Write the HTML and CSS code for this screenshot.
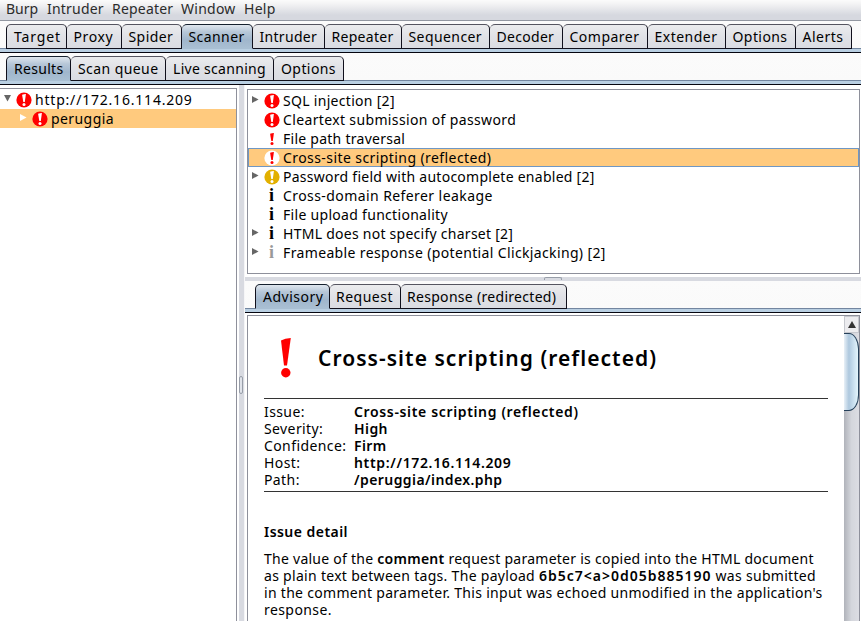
FILE: index.html
```html
<!DOCTYPE html>
<html lang="en">
<head>
<meta charset="utf-8">
<title>Burp Suite</title>
<link rel="stylesheet" href="styles.css">
</head>
<body>
<svg width="0" height="0" class="defs">
  <defs>
    <g id="bang"><path d="M-1.9 -5.2Q0 -6 1.9 -6L0.8 2H-0.7Z"/><circle cx="0" cy="4.6" r="1.5"/></g>
  </defs>
</svg>
<div class="app">
  <nav class="menubar">
    <span class="m-burp">Burp</span><span class="m-intruder">Intruder</span><span class="m-repeater">Repeater</span><span class="m-window">Window</span><span class="m-help">Help</span>
  </nav>
  <div class="tabs main-tabs">
    <div class="tab w60 ls9">Target</div><div class="tab w55 ls6">Proxy</div><div class="tab w60 ls4">Spider</div><div class="tab w71 ls4 active">Scanner</div><div class="tab w72 ls3">Intruder</div><div class="tab w77 ls3">Repeater</div><div class="tab w88 ls4">Sequencer</div><div class="tab w73 ls3">Decoder</div><div class="tab w85 ls5">Comparer</div><div class="tab w78 ls5">Extender</div><div class="tab w70 ls4">Options</div><div class="tab w56 ls5">Alerts</div>
  </div>
  <div class="tabs sub-tabs">
    <div class="tab w64 ls3 active">Results</div><div class="tab w95 ls4">Scan queue</div><div class="tab w108 ls3">Live scanning</div><div class="tab w70 ls4">Options</div>
  </div>
  <div class="workspace">
    <div class="tree">
      <div class="node"><svg class="arrow" viewBox="0 0 8 8"><path d="M0 0H8L4 7.5Z"/></svg><svg class="icon red" viewBox="-8 -8 16 16"><circle r="7.6"/><use href="#bang"/></svg><span class="ls8">http://172.16.114.209</span></div>
      <div class="node child selected"><svg class="arrow" viewBox="0 0 8 8"><path d="M0 0V8L7.5 4Z"/></svg><svg class="icon red" viewBox="-8 -8 16 16"><circle r="7.6"/><use href="#bang"/></svg><span class="ls4">peruggia</span></div>
    </div>
    <div class="vsplit"><i></i></div>
    <div class="right">
      <div class="issues">
        <div class="issue"><svg class="arrow" viewBox="0 0 8 8"><path d="M0 0V8L7.5 4Z"/></svg><svg class="icon red" viewBox="-8 -8 16 16"><circle r="7.6"/><use href="#bang"/></svg><span class="ls3">SQL injection [2]</span></div>
        <div class="issue"><i class="arrow"></i><svg class="icon red" viewBox="-8 -8 16 16"><circle r="7.6"/><use href="#bang"/></svg><span class="ls36">Cleartext submission of password</span></div>
        <div class="issue"><i class="arrow"></i><svg class="icon plain" viewBox="-8 -8 16 16"><use href="#bang"/></svg><span class="ls26">File path traversal</span></div>
        <div class="issue selected"><i class="arrow"></i><svg class="icon white" viewBox="-8 -8 16 16"><circle r="7.6"/><use href="#bang"/></svg><span class="ls4">Cross-site scripting (reflected)</span></div>
        <div class="issue"><svg class="arrow" viewBox="0 0 8 8"><path d="M0 0V8L7.5 4Z"/></svg><svg class="icon amber" viewBox="-8 -8 16 16"><circle r="7.6"/><use href="#bang"/></svg><span class="ls26">Password field with autocomplete enabled [2]</span></div>
        <div class="issue"><i class="arrow"></i><b class="info">i</b><span class="ls4">Cross-domain Referer leakage</span></div>
        <div class="issue"><i class="arrow"></i><b class="info">i</b><span class="ls3">File upload functionality</span></div>
        <div class="issue"><svg class="arrow" viewBox="0 0 8 8"><path d="M0 0V8L7.5 4Z"/></svg><b class="info">i</b><span class="ls26">HTML does not specify charset [2]</span></div>
        <div class="issue"><svg class="arrow" viewBox="0 0 8 8"><path d="M0 0V8L7.5 4Z"/></svg><b class="info faint">i</b><span class="ls36">Frameable response (potential Clickjacking) [2]</span></div>
      </div>
      <div class="hsplit"><i></i></div>
      <div class="tabs detail-tabs">
        <div class="tab w74 ls5 active">Advisory</div><div class="tab w71 ls5">Request</div><div class="tab w166 ls3">Response (redirected)</div>
      </div>
      <div class="viewer">
        <article class="advisory">
          <header><svg class="big" viewBox="0 0 12 42"><path d="M1 3.4Q5 1.2 10.8 1L7 28.5H4Z"/><circle cx="5.8" cy="35.8" r="4.7"/></svg><h1>Cross-site scripting (reflected)</h1></header>
          <dl>
            <dt>Issue:</dt><dd class="ls66">Cross-site scripting (reflected)</dd>
            <dt>Severity:</dt><dd class="ls4">High</dd>
            <dt>Confidence:</dt><dd class="ls4">Firm</dd>
            <dt>Host:</dt><dd class="ls66">http://172.16.114.209</dd>
            <dt>Path:</dt><dd class="ls4">/peruggia/index.php</dd>
          </dl>
          <h2>Issue detail</h2>
          <p><span class="ls26">The value of the <b>comment</b> request parameter is copied into the HTML document</span><br><span class="ls3">as plain text between tags. The payload <b class="payload">6b5c7&lt;a&gt;0d05b885190</b> was submitted</span><br><span class="ls3">in the comment parameter. This input was echoed unmodified in the application's</span><br><span class="ls4">response.</span></p>
        </article>
        <div class="scrollbar"><div class="up"><svg viewBox="0 0 8 7"><path d="M4 0L8 7H0Z"/></svg></div><div class="thumb"></div></div>
      </div>
    </div>
  </div>
</div>
</body>
</html>
```
FILE: styles.css
```css
* { box-sizing: border-box; }
body { margin: 0; background: #fff; color: #000; font: 14px/19px "Noto Sans", "Open Sans", sans-serif; overflow: hidden; }
.defs { position: absolute; }
.app { width: 861px; height: 621px; display: flex; flex-direction: column; overflow: hidden; white-space: nowrap; }

.menubar { height: 21px; flex: none; display: flex; padding-left: 6px; line-height: 17px; color: #2b2b2b; background: linear-gradient(#fbfbfb 0, #f3f3f4 20%, #d6d8df 75%, #d6d8df 100%); border-bottom: 1px solid #9297a1; }
.m-burp { width: 41px; }
.m-intruder { width: 65px; letter-spacing: .2px; }
.m-repeater { width: 69px; letter-spacing: .2px; }
.m-window { width: 63px; letter-spacing: .25px; }
.m-help { letter-spacing: .3px; }

.tabs { flex: none; display: flex; align-items: flex-end; padding-left: 6px; background: linear-gradient(#fbfbfb, #fafafa) 0 0 / 100% calc(100% - 3px) no-repeat, #b9cfe2; border-bottom: 1px solid #05050f; position: relative; }
.tabs::before { content: ""; position: absolute; left: 0; right: 0; bottom: 3px; height: 1px; background: #7386a0; }
.main-tabs { height: 32px; padding-bottom: 3px; }
.sub-tabs { height: 32px; padding-bottom: 3px; }
.tab { position: relative; height: 25px; padding-left: 7px; line-height: 24px; border: 1px solid #10101c; border-top-color: #555560; border-left-width: 0; border-radius: 5px 5px 0 0; background: linear-gradient(#ebecee, #e0e1e6 50%, #dadce2); }
.tab:first-child { border-left-width: 1px; padding-left: 7px; }
.tab.active { border-bottom-color: #a9bfd3; background: linear-gradient(#dfe6ee 0, #b7c7d8 30%, #a0b6cc 65%, #a9bfd3 100%); border-top-color: #15202e; }
.w55{width:55px}.w56{width:56px}.w60{width:60px}.w64{width:65px}.w70{width:70px}.w71{width:71px}.w72{width:72px}.w73{width:73px}.w74{width:75px}.w77{width:77px}.w78{width:78px}.w85{width:85px}.w88{width:88px}.w95{width:95px}.w108{width:108px}.w166{width:166px}
.main-tabs .tab { padding-left: 6.5px; }
.main-tabs .tab:first-child { width: 61px; padding-left: 7px; }
.detail-tabs .tab + .tab { padding-left: 6px; }
.ls26 { letter-spacing: .26px; }
.ls3 { letter-spacing: .3px; }
.ls36 { letter-spacing: .36px; }
.ls4 { letter-spacing: .42px; }
.ls5 { letter-spacing: .49px; }
.ls6 { letter-spacing: .62px; }
.ls66 { letter-spacing: .65px; }
.ls8 { letter-spacing: .8px; }
.ls9 { letter-spacing: .88px; }

.workspace { flex: 1; display: flex; min-height: 0; }
.tree { width: 237px; margin-top: 3px; padding-top: 1px; border: 1px solid #8e909b; border-left: 0; border-bottom: 0; }
.node { height: 19px; display: flex; align-items: center; padding-left: 4px; }
.child { padding-left: 20px; }
.arrow { width: 7px; height: 7px; fill: #666; flex: none; }
.node .arrow { margin-right: 4.5px; margin-top: -3px; }
.node .icon { margin-right: 3.5px; }
.child .arrow { fill: #fff; }
.selected { background: #ffca7e; }
.icon { width: 16px; height: 16px; flex: none; }
.red { fill: #f00; }
.amber { fill: #e2b000; }
.red use, .amber use { fill: #fff; }
.white { fill: #fff; }
.white use, .plain { fill: #f00; }

.vsplit { width: 8px; border-left: 2px solid #fff; border-right: 1px solid #f5f5f7; background: #d8dae1; display: flex; align-items: flex-start; }
.vsplit i { width: 4px; height: 18px; margin-top: 291px; border: 1px solid #979da8; border-radius: 2px; background: #e0e3ea; }
.right { flex: 1; display: flex; flex-direction: column; min-width: 0; }
.issues { height: 185px; flex: none; margin: 4px 1px 0 2px; padding-top: 1px; border: 1px solid #8e909b; }
.issue { height: 19px; display: flex; align-items: center; padding-left: 4px; }
.issue .arrow { margin-right: 4.5px; margin-top: -3px; }
.issue .icon, .info { margin-right: 3.5px; }
.issue.selected { border: 1px solid #6f97c4; padding-left: 3px; }
.info { width: 16px; flex: none; text-align: center; font: bold 18px/19px "Liberation Serif", serif; }
.faint { color: #999; }
.hsplit { height: 4px; flex: none; margin-top: 3px; background: #d8dae1; display: flex; }
.hsplit i { width: 18px; height: 3px; margin-left: 299px; border: 1px solid #979da8; border-bottom: 0; border-radius: 2px 2px 0 0; }
.detail-tabs { height: 32px; padding: 0 0 3px 10px; }
.viewer { flex: 1; min-height: 0; margin: 2px 1px 0 2px; border: 1px solid #8e909b; border-bottom: 0; display: flex; justify-content: space-between; }
.advisory { width: 580px; padding: 19px 0 0 16px; line-height: 17px; }
.advisory header { display: flex; align-items: center; height: 45px; }
.big { width: 12px; height: 42px; margin-left: 15.5px; fill: #f00; }
h1 { font-size: 21px; line-height: 30px; font-weight: 600; letter-spacing: 1.04px; margin: 0 0 0 26.5px; }
dl { margin: 18px 0 0; width: 564px; height: 94px; padding-top: 4px; border-top: 1px solid #333; border-bottom: 1px solid #333; display: grid; grid-template-columns: 90px 1fr; grid-auto-rows: 17px; }
dt { letter-spacing: .4px; }
dd { margin: 0; font-weight: 600; }
h2 { font-size: 14px; line-height: 17px; font-weight: 600; letter-spacing: .46px; margin: 31px 0 10px; }
p { margin: 0; }
p b { font-weight: 600; }
.payload { letter-spacing: 1px; }
.scrollbar { width: 15px; background: linear-gradient(90deg, #b0b3ba, #d4d6dc 50%, #dcdde3); }
.up { height: 17px; display: flex; align-items: center; justify-content: center; background: #ececef; border: 1px solid #c6c8ce; }
.up svg { width: 8px; height: 7px; fill: #333; }
.thumb { width: 15px; height: 78px; border: 1.5px solid #25405a; border-left: 0; border-radius: 0 10px 10px 0 / 0 16px 16px 0; background: linear-gradient(90deg, #e8f0f7, #aec8de 35%, #cfe4f2 75%, #e4f5fb); }
```
